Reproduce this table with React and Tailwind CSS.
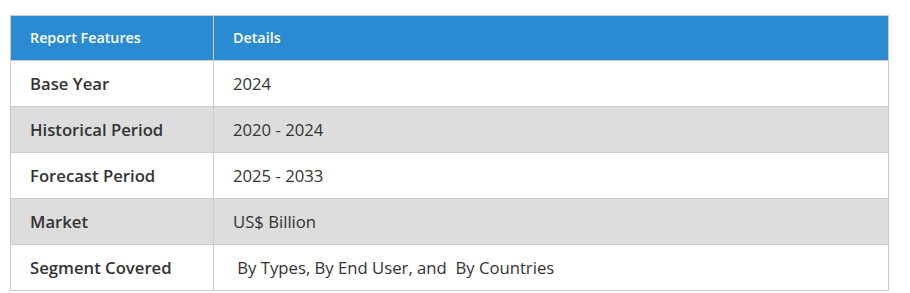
import React from "react";

const rows = [
  ["Base Year", "2024"],
  ["Historical Period", "2020 - 2024"],
  ["Forecast Period", "2025 - 2033"],
  ["Market", "US$ Billion"],
  ["Segment Covered", "\u00a0By Types, By End User, and \u00a0By Countries"],
];

const App = () => {
  return (
    <div className="min-h-screen bg-white pt-[15px] pl-[10px] font-['Open_Sans',sans-serif]">
      <table className="w-[879px] border-collapse border border-[#cccccc] text-[#333333]">
        <thead>
          <tr className="bg-[#2a8bd2] h-[45px] text-white text-[14.3px] font-semibold">
            <th className="w-[203px] border border-[#cccccc] px-[19px] text-left font-semibold">
              Report Features
            </th>
            <th className="border border-[#cccccc] px-[19px] text-left font-semibold">
              Details
            </th>
          </tr>
        </thead>
        <tbody>
          {rows.map(([k, v], i) => (
            <tr
              key={k}
              className={`h-[46px] text-[16.7px] ${i % 2 === 1 ? "bg-[#dddddd]" : "bg-white"}`}
            >
              <td className="border border-[#cccccc] px-[19px] font-semibold">{k}</td>
              <td className="border border-[#cccccc] px-[19px]">{v}</td>
            </tr>
          ))}
        </tbody>
      </table>
    </div>
  );
};

export default App;
